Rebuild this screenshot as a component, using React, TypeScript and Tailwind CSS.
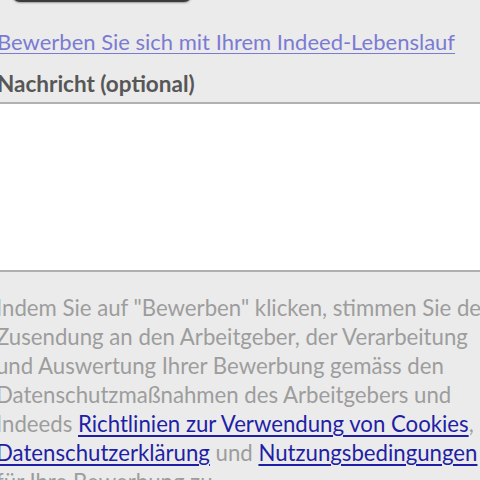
export default function App() {
  const font = { fontFamily: "Lato, 'Noto Sans', sans-serif" };
  return (
    <div className="w-[480px] h-[480px] overflow-hidden bg-[#ebebeb]" style={font}>
      {/* Apply button, mostly scrolled off the top */}
      <div className="ml-[12px] mt-[-38px] h-[40px] w-[180px] rounded-lg bg-[#3b3b3b] shadow-[0_1px_2px_rgba(0,0,0,0.35)]" />

      <div className="ml-[-3px] mt-[25px] whitespace-nowrap">
        <a href="#" className="block text-[22px] leading-[30px] text-[#7b7bd3] underline underline-offset-[3px] decoration-1">
          Bewerben Sie sich mit Ihrem Indeed-Lebenslauf
        </a>
        <div className="mt-[13px] text-[22.5px] leading-[28px] font-bold text-[#575757]">Nachricht (optional)</div>
      </div>

      {/* Message field */}
      <div className="mt-[4px] h-[170px] w-full bg-white border-y-2 border-y-[#b0b0b0]" />

      <div className="ml-[-4px] mt-[21px] whitespace-nowrap text-[22.2px] leading-[29px] text-[#9d9d9d]">
        <div>Indem Sie auf "Bewerben" klicken, stimmen Sie der</div>
        <div>Zusendung an den Arbeitgeber, der Verarbeitung</div>
        <div>und Auswertung Ihrer Bewerbung gemäss den</div>
        <div>Datenschutzmaßnahmen des Arbeitgebers und</div>
        <div>
          Indeeds{" "}
          <a href="#" className="text-[#1f1fa6] underline underline-offset-[3px]">Richtlinien zur Verwendung von Cookies</a>,
        </div>
        <div>
          <a href="#" className="text-[#1f1fa6] underline underline-offset-[3px]">Datenschutzerklärung</a> und{" "}
          <a href="#" className="text-[#1f1fa6] underline underline-offset-[3px]">Nutzungsbedingungen</a>
        </div>
        <div>für Ihre Bewerbung zu.</div>
      </div>
    </div>
  );
}
